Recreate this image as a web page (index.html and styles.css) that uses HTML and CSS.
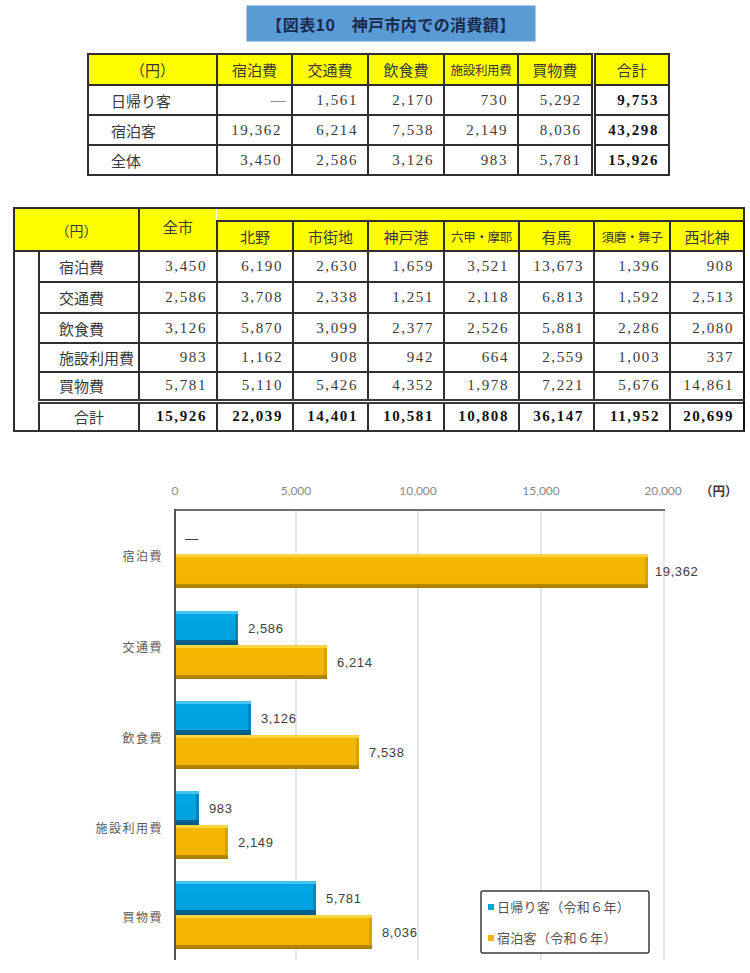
FILE: index.html
```html
<!DOCTYPE html>
<html lang="ja">
<head>
<meta charset="utf-8">
<title>図表10 神戸市内での消費額</title>
<link rel="stylesheet" href="styles.css">
</head>
<body>
<div class="page">
  <div class="title">【図表10　神戸市内での消費額】</div>

  <table class="t1">
    <colgroup>
      <col class="w129"><col class="w75"><col class="w76"><col class="w76"><col class="w74"><col class="w75"><col class="w76">
    </colgroup>
    <thead>
      <tr class="hrow">
        <th>（円）</th><th>宿泊費</th><th>交通費</th><th>飲食費</th><th class="small">施設利用費</th><th>買物費</th><th class="sum">合計</th>
      </tr>
    </thead>
    <tbody>
      <tr><td class="lab">日帰り客</td><td class="num dash">—</td><td class="num">1,561</td><td class="num">2,170</td><td class="num">730</td><td class="num">5,292</td><td class="num sum bold">9,753</td></tr>
      <tr><td class="lab">宿泊客</td><td class="num">19,362</td><td class="num">6,214</td><td class="num">7,538</td><td class="num">2,149</td><td class="num">8,036</td><td class="num sum bold">43,298</td></tr>
      <tr><td class="lab">全体</td><td class="num">3,450</td><td class="num">2,586</td><td class="num">3,126</td><td class="num">983</td><td class="num">5,781</td><td class="num sum bold">15,926</td></tr>
    </tbody>
  </table>

  <table class="t2">
    <colgroup>
      <col class="w25"><col class="w100"><col class="w78"><col class="w76"><col class="w75"><col class="w76"><col class="w75"><col class="w75"><col class="w76"><col class="w74">
    </colgroup>
    <thead>
      <tr class="strip-row">
        <th colspan="2" rowspan="2" class="yen">（円）</th>
        <th rowspan="2" class="zenshi">全市</th>
        <th colspan="8" class="strip"></th>
      </tr>
      <tr class="area-row">
        <th class="first-area">北野</th><th>市街地</th><th>神戸港</th><th class="small">六甲・摩耶</th><th>有馬</th><th class="small">須磨・舞子</th><th>西北神</th>
      </tr>
    </thead>
    <tbody>
      <tr class="r1"><td rowspan="6" class="blank"></td><td class="lab2">宿泊費</td><td class="num">3,450</td><td class="num">6,190</td><td class="num">2,630</td><td class="num">1,659</td><td class="num">3,521</td><td class="num">13,673</td><td class="num">1,396</td><td class="num">908</td></tr>
      <tr class="r2"><td class="lab2">交通費</td><td class="num">2,586</td><td class="num">3,708</td><td class="num">2,338</td><td class="num">1,251</td><td class="num">2,118</td><td class="num">6,813</td><td class="num">1,592</td><td class="num">2,513</td></tr>
      <tr class="r3"><td class="lab2">飲食費</td><td class="num">3,126</td><td class="num">5,870</td><td class="num">3,099</td><td class="num">2,377</td><td class="num">2,526</td><td class="num">5,881</td><td class="num">2,286</td><td class="num">2,080</td></tr>
      <tr class="r4"><td class="lab2">施設利用費</td><td class="num">983</td><td class="num">1,162</td><td class="num">908</td><td class="num">942</td><td class="num">664</td><td class="num">2,559</td><td class="num">1,003</td><td class="num">337</td></tr>
      <tr class="r5"><td class="lab2">買物費</td><td class="num">5,781</td><td class="num">5,110</td><td class="num">5,426</td><td class="num">4,352</td><td class="num">1,978</td><td class="num">7,221</td><td class="num">5,676</td><td class="num">14,861</td></tr>
      <tr class="total"><td class="lab2 center">合計</td><td class="num bold">15,926</td><td class="num bold">22,039</td><td class="num bold">14,401</td><td class="num bold">10,581</td><td class="num bold">10,808</td><td class="num bold">36,147</td><td class="num bold">11,952</td><td class="num bold">20,699</td></tr>
    </tbody>
  </table>

  <svg class="chart" width="750" height="543" viewBox="0 430 750 543" xmlns="http://www.w3.org/2000/svg">
    <defs>
      <linearGradient id="gOrange" x1="0" y1="0" x2="0" y2="1">
        <stop offset="0" stop-color="#FFD43E"/>
        <stop offset="0.08" stop-color="#FFD43E"/>
        <stop offset="0.08" stop-color="#F5B800"/>
        <stop offset="0.87" stop-color="#F2B400"/>
        <stop offset="0.87" stop-color="#B98A00"/>
        <stop offset="1" stop-color="#A97C00"/>
      </linearGradient>
      <linearGradient id="gBlue" x1="0" y1="0" x2="0" y2="1">
        <stop offset="0" stop-color="#45C2F0"/>
        <stop offset="0.08" stop-color="#45C2F0"/>
        <stop offset="0.08" stop-color="#00A6E4"/>
        <stop offset="0.86" stop-color="#00A0DE"/>
        <stop offset="0.86" stop-color="#00628F"/>
        <stop offset="1" stop-color="#005A85"/>
      </linearGradient>
    </defs>

    <!-- axis labels -->
    <g class="axis-txt">
      <text x="175" y="493" text-anchor="middle">0</text>
      <text x="296" y="493" text-anchor="middle">5,000</text>
      <text x="418" y="493" text-anchor="middle">10,000</text>
      <text x="541" y="493" text-anchor="middle">15,000</text>
      <text x="663" y="493" text-anchor="middle">20,000</text>
    </g>
    <text class="unit" x="700" y="494">（円）</text>

    <!-- grid -->
    <g stroke="#dcdcdc" stroke-width="1.5">
      <line x1="296" y1="509" x2="296" y2="958"/>
      <line x1="418" y1="509" x2="418" y2="958"/>
      <line x1="541" y1="509" x2="541" y2="958"/>
      <line x1="664" y1="509" x2="664" y2="958"/>
    </g>
    <line x1="175" y1="508" x2="665" y2="508" stroke="#6f6f6f" stroke-width="2"/>
    <line x1="175" y1="507" x2="175" y2="958" stroke="#555" stroke-width="2"/>

    <!-- category labels -->
    <g class="cat">
      <text x="163" y="559" text-anchor="end">宿泊費</text>
      <text x="163" y="650" text-anchor="end">交通費</text>
      <text x="163" y="741" text-anchor="end">飲食費</text>
      <text x="163" y="831" text-anchor="end">施設利用費</text>
      <text x="163" y="920" text-anchor="end">買物費</text>
    </g>

    <!-- bars -->
    <g>
      <rect x="176" y="552" width="472" height="34" fill="url(#gOrange)"/>
      <rect x="645" y="555" width="3" height="27" fill="#D9A300"/>

      <rect x="176" y="609" width="62" height="34" fill="url(#gBlue)"/>
      <rect x="235" y="612" width="3" height="26" fill="#0085BE"/>
      <rect x="176" y="643" width="151" height="34" fill="url(#gOrange)"/>
      <rect x="324" y="646" width="3" height="27" fill="#D9A300"/>

      <rect x="176" y="699" width="75" height="34" fill="url(#gBlue)"/>
      <rect x="248" y="702" width="3" height="26" fill="#0085BE"/>
      <rect x="176" y="733" width="183" height="34" fill="url(#gOrange)"/>
      <rect x="356" y="736" width="3" height="27" fill="#D9A300"/>

      <rect x="176" y="789" width="23" height="34" fill="url(#gBlue)"/>
      <rect x="196" y="792" width="3" height="26" fill="#0085BE"/>
      <rect x="176" y="823" width="52" height="34" fill="url(#gOrange)"/>
      <rect x="225" y="826" width="3" height="27" fill="#D9A300"/>

      <rect x="176" y="879" width="140" height="34" fill="url(#gBlue)"/>
      <rect x="313" y="882" width="3" height="26" fill="#0085BE"/>
      <rect x="176" y="913" width="196" height="34" fill="url(#gOrange)"/>
      <rect x="369" y="916" width="3" height="27" fill="#D9A300"/>
    </g>

    <!-- data labels -->
    <g class="val">
      <text x="185" y="541">—</text>
      <text x="655" y="574">19,362</text>
      <text x="248" y="631">2,586</text>
      <text x="337" y="665">6,214</text>
      <text x="261" y="721">3,126</text>
      <text x="369" y="755">7,538</text>
      <text x="209" y="811">983</text>
      <text x="238" y="845">2,149</text>
      <text x="326" y="901">5,781</text>
      <text x="382" y="935">8,036</text>
    </g>

    <!-- legend -->
    <rect x="481" y="889" width="168" height="62" rx="2" fill="#fff" stroke="#3a3a3a" stroke-width="1.5"/>
    <rect x="488" y="902" width="6" height="6" fill="#00A6E4"/>
    <text class="leg" x="497" y="910">日帰り客（令和６年）</text>
    <rect x="488" y="933" width="6" height="6" fill="#F2B400"/>
    <text class="leg" x="497" y="941">宿泊客（令和６年）</text>
  </svg>
</div>
</body>
</html>
```

FILE: styles.css
```css
html, body {
  margin: 0;
  padding: 0;
  background: #ffffff;
}

body {
  font-family: "Noto Sans CJK JP", "Noto Sans", sans-serif;
  color: #333333;
}

.page {
  width: 750px;
  padding-top: 5px;
}

.title {
  margin-left: 246px;
  width: 290px;
  height: 37px;
  box-sizing: border-box;
  background: #5b9bd5;
  border: 1px solid #b3cde9;
  display: flex;
  align-items: center;
  justify-content: center;
  font-size: 16px;
  font-weight: 700;
  color: #1a2a4c;
  letter-spacing: 0.4px;
}

/* ---------- shared table ---------- */
table {
  border-collapse: collapse;
  table-layout: fixed;
}

th, td {
  border: 2px solid #2e2e2e;
  padding: 0;
  white-space: nowrap;
  overflow: hidden;
}

th {
  background: #ffff00;
  font-weight: 400;
  font-size: 15px;
  color: #3a3a3a;
  text-align: center;
}

th.small {
  font-size: 12.5px;
  letter-spacing: -0.3px;
}

.num {
  font-family: "Liberation Serif", "Noto Sans CJK JP", serif;
  font-size: 15px;
  letter-spacing: 1.6px;
  text-align: right;
  padding-right: 9px;
  color: #3a3a3a;
}

.num.dash {
  padding-right: 4px;
}

.bold {
  font-weight: 700;
  color: #111111;
}

.w25 { width: 25px; }
.w74 { width: 74px; }
.w75 { width: 75px; }
.w76 { width: 76px; }
.w78 { width: 78px; }
.w100 { width: 100px; }
.w129 { width: 129px; }

/* ---------- table 1 ---------- */
.t1 {
  margin: 11px 0 0 87px;
  width: 582px;
  border: 2px solid #111111;
}

.t1 .hrow { height: 31px; }
.t1 tbody tr { height: 30px; }

.t1 .lab {
  font-size: 15px;
  padding-left: 22px;
  color: #3a3a3a;
}

.t1 .sum {
  border-left: 5px double #2e2e2e;
}

/* ---------- table 2 ---------- */
.t2 {
  margin: 31px 0 0 13px;
  width: 730px;
  border: 2px solid #111111;
}

.t2 .strip-row { height: 13px; }
.t2 .area-row { height: 30px; }

.t2 .yen {
  font-size: 14px;
  vertical-align: middle;
}

.t2 .zenshi {
  border-right: none;
  vertical-align: middle;
  padding-bottom: 6px;
}

.t2 .strip {
  border-left: none;
}

.t2 .first-area {
  border-left: 2px solid #2e2e2e;
}

.t2 .r1, .t2 .r2 { height: 31px; }
.t2 .r3 { height: 30px; }
.t2 .r4 { height: 29px; }
.t2 .r5 { height: 29px; }
.t2 .total { height: 30px; }

.t2 .total td {
  border-top: 5px double #3a3a3a;
}

.t2 td.blank {
  border-top: 2px solid #2e2e2e;
}

.t2 .lab2 {
  font-size: 15px;
  padding-left: 19px;
  color: #3a3a3a;
}

.t2 .lab2.center {
  text-align: center;
  padding-left: 0;
}

/* ---------- chart ---------- */
.chart {
  display: block;
}

.axis-txt text {
  font-family: Lato, "Open Sans", "Liberation Sans", sans-serif;
  font-size: 12px;
  fill: #8a8a8a;
}

.unit {
  font-family: "Noto Sans CJK JP", sans-serif;
  font-size: 12.5px;
  font-weight: 700;
  fill: #3a3a3a;
}

.cat text {
  font-family: "Noto Sans CJK JP", sans-serif;
  font-size: 12px;
  letter-spacing: 1.5px;
  fill: #5a5a5a;
}

.val text {
  font-family: "Liberation Sans", "DejaVu Sans", sans-serif;
  font-size: 13px;
  letter-spacing: 0.6px;
  fill: #404040;
}

.leg {
  font-family: "Noto Sans CJK JP", sans-serif;
  font-size: 13px;
  letter-spacing: 0.3px;
  fill: #555555;
}
```
